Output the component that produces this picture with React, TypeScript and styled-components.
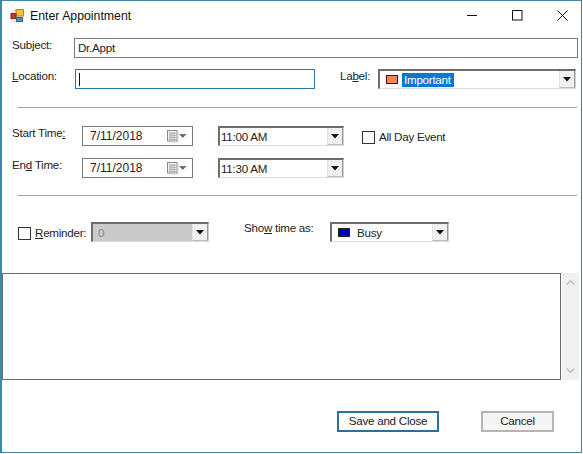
import React from "react";
import styled, { createGlobalStyle } from "styled-components";

const Global = createGlobalStyle`
  html, body { margin: 0; padding: 0; background: #fff; }
  body { font-family: "Liberation Sans", Arial, sans-serif; font-size: 11.6px; letter-spacing: -0.25px; color: #1c1c1c; }
  * { box-sizing: border-box; }
`;

const Win = styled.div`
  width: 582px; height: 453px;
  border: 1px solid #3f87a9;
  border-left-width: 2px;
  background: #fff;
  display: flex; flex-direction: column;
  overflow: hidden;
`;
const TitleBar = styled.div`
  height: 37px; flex: none;
  display: flex; align-items: flex-start;
  padding: 8px 0 0 8px;
`;
const TitleText = styled.span`
  margin: 0 0 0 6px; font-size: 12.3px; letter-spacing: 0; line-height: 15px; color: #111;
`;
const WinControls = styled.div`
  margin-left: auto; display: flex; gap: 34px; padding: 1px 13px 0 0; align-items: center;
`;
const Row = styled.div<{ $h: number; $mt?: number; $pl?: number }>`
  display: flex; align-items: flex-start; flex: none;
  height: ${p => p.$h}px;
  margin-top: ${p => p.$mt ?? 0}px;
  padding-left: ${p => p.$pl ?? 0}px;
`;
const Caption = styled.span<{ $w: number; $ml?: number; $top?: number }>`
  width: ${p => p.$w}px; flex: none; white-space: nowrap;
  margin-left: ${p => p.$ml ?? 0}px;
  margin-top: ${p => p.$top ?? 0}px;
  line-height: 14px; color: #222;
  u { text-underline-offset: 1px; }
`;
const TextField = styled.div<{ $w: number; $focus?: boolean }>`
  width: ${p => p.$w}px; height: 20px; flex: none;
  border: 1px solid ${p => (p.$focus ? "#2b77ad" : "#7a7a7a")};
  padding: 0 0 0 3px; line-height: 18px; color: #222;
  display: flex; align-items: center;
`;
const Caret = styled.span`
  width: 1px; height: 13px; background: #111;
`;
const Rule = styled.div<{ $mt: number }>`
  height: 1px; flex: none; background: #a5a5a5;
  margin: ${p => p.$mt}px 4px 0 16px;
`;
const Combo = styled.div<{ $w: number; $ml?: number; $disabled?: boolean }>`
  width: ${p => p.$w}px; height: 20px; flex: none;
  margin-left: ${p => p.$ml ?? 0}px;
  border-top: 2px solid #6d6d6d; border-left: 2px solid #6d6d6d;
  border-right: 1px solid #cfcfcf; border-bottom: 1px solid #dcdcdc;
  background: ${p => (p.$disabled ? "#cacaca" : "#fff")};
  display: flex; align-items: center;
  color: ${p => (p.$disabled ? "#8a8a8a" : "#222")};
`;
const ComboText = styled.span<{ $pl?: number }>`
  padding-left: ${p => p.$pl ?? 1}px; line-height: 16px;
`;
const ArrowBtn = styled.div`
  margin-left: auto; width: 16px; height: 17px; flex: none;
  background: #f0f0f0; border-left: 1px solid #e4e4e4; border-bottom: 1px solid #bdbdbd; border-right: 1px solid #9a9a9a;
  display: flex; align-items: center; justify-content: center;
`;
const Swatch = styled.span<{ $c: string; $ml: number }>`
  width: 12px; height: 9px; flex: none;
  margin-left: ${p => p.$ml}px;
  background: ${p => p.$c};
  border: 1px solid #222;
`;
const Selected = styled.span`
  margin-left: 4px; background: #0a78d0; color: #fff; padding: 0 3px 0 2px; line-height: 14px;
`;
const DateBox = styled.div`
  width: 111px; height: 20px; flex: none;
  border: 1px solid #7a7a7a;
  display: flex; align-items: center; padding: 0 0 1px 7px;
  color: #222; font-size: 12px; letter-spacing: 0;
`;
const DateIcons = styled.span`
  margin-left: auto; padding-right: 5px; display: flex; align-items: center;
`;
const Check = styled.span<{ $ml?: number; $mt?: number }>`
  width: 13px; height: 13px; flex: none;
  margin-left: ${p => p.$ml ?? 0}px; margin-top: ${p => p.$mt ?? 0}px;
  border: 1px solid #333; background: #fff;
`;
const MemoRow = styled.div`
  display: flex; flex: none; height: 107px; margin-top: 31px;
`;
const Memo = styled.div`
  width: 559px; height: 107px; flex: none;
  border: 1px solid #6a6a6a; background: #fff;
`;
const ScrollTrack = styled.div`
  width: 17px; flex: none; background: #f0f0f0; margin-left: 1px;
  display: flex; flex-direction: column; justify-content: space-between; align-items: center;
  padding: 7px 0;
`;
const Footer = styled.div`
  display: flex; flex: none; margin-top: 31px; padding-left: 335px;
`;
const Primary = styled.div`
  width: 102px; height: 21px; flex: none;
  border: 2px solid #2b6f9f; background: #fdfdfd; padding-bottom: 2px;
  display: flex; align-items: center; justify-content: center; color: #222;
`;
const Secondary = styled.div`
  width: 73px; height: 21px; flex: none; margin-left: 42px;
  border: 2px solid #b4b4b4; background: #f5f5f5; padding-bottom: 2px;
  display: flex; align-items: center; justify-content: center; color: #222;
`;

const Down = () => (
  <svg width="9" height="5" viewBox="0 0 9 5"><path d="M0 0h8L4 4.500z" fill="#111" /></svg>
);
const Arrow = () => <ArrowBtn><Down /></ArrowBtn>;
const Cal = () => (
  <>
    <svg width="13" height="14" viewBox="0 0 13 14">
      <rect x="1.500" y="1.500" width="9.500" height="10.500" fill="#eceef0" stroke="#8a8a8a" />
      <path d="M3 4.500h7M3 6.500h7M3 8.500h7M3 10.500h7M4 3v8M6 3v8M8 3v8" stroke="#a9a9a9" strokeWidth=".8" />
      <path d="M12 3v10H3" stroke="#d0d0d0" fill="none" />
    </svg>
    <svg width="8" height="4" viewBox="0 0 8 4"><path d="M0 0h7.500L3.750 4z" fill="#4f6f93" /></svg>
  </>
);
const DateField = ({ v }: { v: string }) => (
  <DateBox>{v}<DateIcons><Cal /></DateIcons></DateBox>
);

export default function App() {
  return (
    <>
      <Global />
      <Win>
        <TitleBar>
          <svg width="14" height="14" viewBox="0 0 14 14">
            <rect x="0.500" y="0.500" width="13" height="13" fill="#ece9e2" />
            <rect x="6" y="0.500" width="7.500" height="6.500" fill="#f1c232" stroke="#b58a27" />
            <rect x="1" y="4.500" width="5" height="5" fill="#c0392b" stroke="#7d2a2a" />
            <rect x="6.500" y="8.500" width="6" height="4" fill="#5b88c9" stroke="#3c5f94" />
          </svg>
          <TitleText>Enter Appointment</TitleText>
          <WinControls>
            <svg width="11" height="11" viewBox="0 0 11 11"><path d="M0 5.500h10" stroke="#111" /></svg>
            <svg width="11" height="11" viewBox="0 0 11 11"><rect x=".5" y=".5" width="9.500" height="9.500" fill="none" stroke="#111" /></svg>
            <svg width="11" height="11" viewBox="0 0 11 11"><path d="M.5.500l10 10M10.500.500l-10 10" stroke="#111" /></svg>
          </WinControls>
        </TitleBar>
        <Row $h={20} $pl={10}>
          <Caption $w={62}>Sub<u>j</u>ect:</Caption>
          <TextField $w={504}>Dr.Appt</TextField>
        </Row>
        <Row $h={21} $mt={11} $pl={10}>
          <Caption $w={63}><u>L</u>ocation:</Caption>
          <TextField $w={240} $focus><Caret /></TextField>
          <Caption $w={38} $ml={25}>La<u>b</u>el:</Caption>
          <Combo $w={198}>
            <Swatch $c="#f4854c" $ml={6} />
            <Selected>Important</Selected>
            <Arrow />
          </Combo>
        </Row>
        <Rule $mt={17} />
        <Row $h={20} $mt={18} $pl={10}>
          <Caption $w={70}>Start Time<u>:</u></Caption>
          <DateField v="7/11/2018" />
          <Combo $w={126} $ml={25}><ComboText>11:00 AM</ComboText><Arrow /></Combo>
          <Check $ml={18} $mt={5} />
          <Caption $w={90} $ml={4} $top={4}>All Day Event</Caption>
        </Row>
        <Row $h={20} $mt={12} $pl={10}>
          <Caption $w={70}>En<u>d</u> Time:</Caption>
          <DateField v="7/11/2018" />
          <Combo $w={126} $ml={25}><ComboText>11:30 AM</ComboText><Arrow /></Combo>
        </Row>
        <Rule $mt={17} />
        <Row $h={20} $mt={26} $pl={16}>
          <Check $mt={5} />
          <Caption $w={56} $ml={4} $top={4}><u>R</u>eminder:</Caption>
          <Combo $w={118} $disabled><ComboText $pl={5}>0</ComboText><Arrow /></Combo>
          <Caption $w={86} $ml={35} $top={-1}>Sho<u>w</u> time as:</Caption>
          <Combo $w={119}><Swatch $c="#0000c8" $ml={6} /><ComboText $pl={7}>Busy</ComboText><Arrow /></Combo>
        </Row>
        <MemoRow>
          <Memo />
          <ScrollTrack>
            <svg width="9" height="5" viewBox="0 0 9 5"><path d="M.7 4.500l3.800-3.800 3.800 3.800" fill="none" stroke="#c4c4c4" strokeWidth="1.6" /></svg>
            <svg width="9" height="5" viewBox="0 0 9 5"><path d="M.7.500l3.800 3.800 3.800-3.800" fill="none" stroke="#c4c4c4" strokeWidth="1.6" /></svg>
          </ScrollTrack>
        </MemoRow>
        <Footer>
          <Primary>Save and Close</Primary>
          <Secondary>Cancel</Secondary>
        </Footer>
      </Win>
    </>
  );
}
